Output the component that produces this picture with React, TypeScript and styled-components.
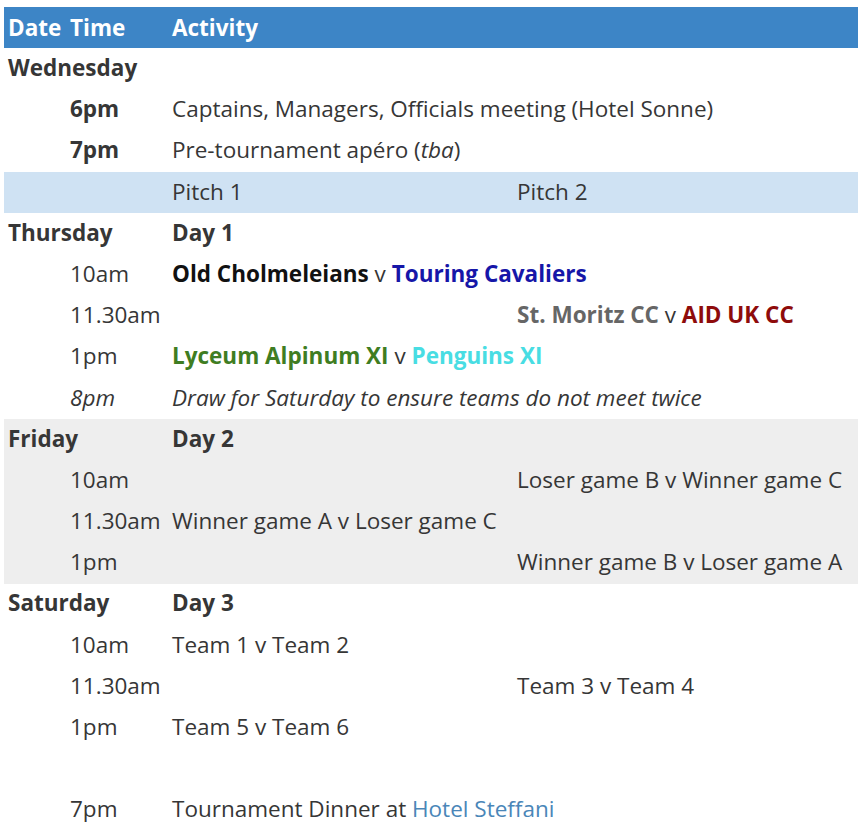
import React from "react";
import styled, { createGlobalStyle } from "styled-components";

const GlobalStyle = createGlobalStyle`
    body{
        margin: 0;
        padding: 7px 3px 0 4px;
        background: #ffffff;
        font-family: "Open Sans", "Noto Sans", sans-serif;
    }
`;

const Table = styled.table`
    width: 854px;
    border-collapse: collapse;
    table-layout: fixed;
    font-size: 22.5px;
    color: #363636;
`;

const Row = styled.tr<{ $tone?: "head" | "pitch" | "grey" }>`
    height: 41.2px;
    background: ${({ $tone }) =>
        $tone === "head" ? "#3d85c6" : $tone === "pitch" ? "#cfe2f3" : $tone === "grey" ? "#eeeeee" : "transparent"};
    color: ${({ $tone }) => ($tone === "head" ? "#ffffff" : "inherit")};
`;

const Cell = styled.td<{ $bold?: boolean; $italic?: boolean }>`
    padding: 0 4px 1px;
    white-space: nowrap;
    vertical-align: middle;
    line-height: 1;
    font-weight: ${({ $bold }) => ($bold ? 700 : 400)};
    font-style: ${({ $italic }) => ($italic ? "italic" : "normal")};
`;

const HeadCell = styled.th`
    padding: 0 4px 1px;
    text-align: left;
    font-weight: 700;
    white-space: nowrap;
`;

const Team = styled.span<{ $color: string }>`
    font-weight: 700;
    color: ${({ $color }) => $color};
`;

const Link = styled.a`
    color: #4a86b8;
    text-decoration: none;
`;

type Slot = { time: string; a?: React.ReactNode; b?: React.ReactNode };

const Day = ({ name, label, slots, grey }: { name: string; label: string; slots: Slot[]; grey?: boolean }) => (
    <>
        <Row $tone={grey ? "grey" : undefined}>
            <Cell colSpan={2} $bold>{name}</Cell>
            <Cell $bold>{label}</Cell>
            <Cell />
        </Row>
        {slots.map((s, i) => (
            <Row key={i} $tone={grey ? "grey" : undefined}>
                <Cell />
                <Cell>{s.time}</Cell>
                <Cell>{s.a}</Cell>
                <Cell>{s.b}</Cell>
            </Row>
        ))}
    </>
);

const App = () => {
    return (
        <>
            <GlobalStyle />
            <Table>
                <colgroup>
                    <col style={{ width: 62 }} />
                    <col style={{ width: 102 }} />
                    <col style={{ width: 345 }} />
                    <col style={{ width: 345 }} />
                </colgroup>
                <thead>
                    <Row $tone="head">
                        <HeadCell>Date</HeadCell>
                        <HeadCell>Time</HeadCell>
                        <HeadCell>Activity</HeadCell>
                        <HeadCell />
                    </Row>
                </thead>
                <tbody>
                    <Row>
                        <Cell colSpan={2} $bold>Wednesday</Cell>
                        <Cell />
                        <Cell />
                    </Row>
                    <Row>
                        <Cell />
                        <Cell $bold>6pm</Cell>
                        <Cell colSpan={2}>Captains, Managers, Officials meeting (Hotel Sonne)</Cell>
                    </Row>
                    <Row>
                        <Cell />
                        <Cell $bold>7pm</Cell>
                        <Cell colSpan={2}>Pre-tournament apéro (<i>tba</i>)</Cell>
                    </Row>
                    <Row $tone="pitch">
                        <Cell />
                        <Cell />
                        <Cell>Pitch 1</Cell>
                        <Cell>Pitch 2</Cell>
                    </Row>
                    <Day
                        name="Thursday"
                        label="Day 1"
                        slots={[
                            {
                                time: "10am",
                                a: (
                                    <>
                                        <Team $color="#111111">Old Cholmeleians</Team> v <Team $color="#1616a8">Touring Cavaliers</Team>
                                    </>
                                ),
                            },
                            {
                                time: "11.30am",
                                b: (
                                    <>
                                        <Team $color="#666666">St. Moritz CC</Team> v <Team $color="#8e0b0b">AID UK CC</Team>
                                    </>
                                ),
                            },
                            {
                                time: "1pm",
                                a: (
                                    <>
                                        <Team $color="#3f7d22">Lyceum Alpinum XI</Team> v <Team $color="#48dde3">Penguins XI</Team>
                                    </>
                                ),
                            },
                        ]}
                    />
                    <Row>
                        <Cell />
                        <Cell $italic>8pm</Cell>
                        <Cell colSpan={2} $italic>Draw for Saturday to ensure teams do not meet twice</Cell>
                    </Row>
                    <Day
                        grey
                        name="Friday"
                        label="Day 2"
                        slots={[
                            { time: "10am", b: "Loser game B v Winner game C" },
                            { time: "11.30am", a: "Winner game A v Loser game C" },
                            { time: "1pm", b: "Winner game B v Loser game A" },
                        ]}
                    />
                    <Day
                        name="Saturday"
                        label="Day 3"
                        slots={[
                            { time: "10am", a: "Team 1 v Team 2" },
                            { time: "11.30am", b: "Team 3 v Team 4" },
                            { time: "1pm", a: "Team 5 v Team 6" },
                            { time: "" },
                            {
                                time: "7pm",
                                a: (
                                    <>
                                        Tournament Dinner at <Link href="#">Hotel Steffani</Link>
                                    </>
                                ),
                            },
                        ]}
                    />
                </tbody>
            </Table>
        </>
    );
};

export default App;
